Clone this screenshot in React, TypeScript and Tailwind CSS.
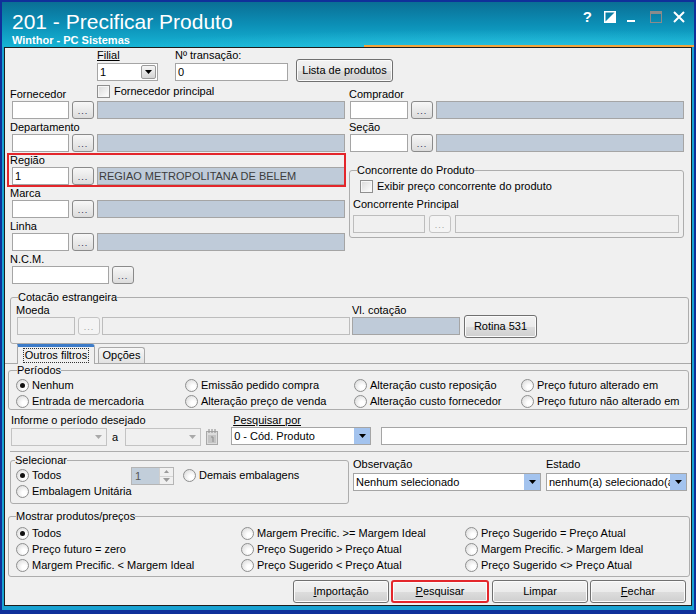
import React from 'react';

type Kids = { children?: React.ReactNode; className?: string };

const Arrow = ({ color = '#000' }: { color?: string }) => (
  <svg width="7" height="4" viewBox="0 0 7 4">
    <path d="M0 0h7L3.5 4z" fill={color} />
  </svg>
);

function Lbl({ children, className = '' }: Kids) {
  return <div className={`h-[13px] text-[11px] leading-[13px] text-black whitespace-nowrap ${className}`}>{children}</div>;
}

function Edit({ className = '', value = '', disabled = false }: { className?: string; value?: string; disabled?: boolean }) {
  return (
    <div
      className={`h-[18px] shrink-0 border px-[2px] text-[11px] leading-[16px] text-black whitespace-nowrap overflow-hidden ${
        disabled ? 'border-[#bdbdbd] bg-[#f0f0f0]' : 'border-[#a5a5a5] bg-white'
      } ${className}`}
    >
      {value}
    </div>
  );
}

function Info({ className = '', value = '' }: { className?: string; value?: string }) {
  return (
    <div className={`h-[18px] shrink-0 border border-[#a5a5a5] bg-[#bfcbd9] px-[1px] text-[11px] leading-[16px] text-[#3c3c3c] whitespace-nowrap overflow-hidden ${className}`}>
      {value}
    </div>
  );
}

function Dots({ className = '', disabled = false }: { className?: string; disabled?: boolean }) {
  return (
    <div
      className={`h-[18px] shrink-0 rounded-[3px] border flex items-end justify-center pb-[2px] text-[9px] leading-[9px] tracking-[1px] ${
        disabled
          ? 'border-[#c4c4c4] bg-[#f4f4f4] text-[#a0a0a0]'
          : 'border-[#8a8a8a] bg-[linear-gradient(#f7f7f7,#dcdcdc)] text-[#1c1c4c]'
      } ${className}`}
    >
      ...
    </div>
  );
}

function WinBtn({ children, className = '' }: Kids) {
  return (
    <div
      className={`h-[23px] shrink-0 rounded-[3px] border border-[#707070] bg-[linear-gradient(#f2f2f2_0%,#ebebeb_50%,#dddddd_51%,#cfcfcf_100%)] shadow-[inset_0_0_0_1px_#fbfbfb] flex items-center justify-center text-[11px] leading-[13px] text-black ${className}`}
    >
      {children}
    </div>
  );
}

function Radio({ label, checked = false }: { label: string; checked?: boolean }) {
  return (
    <div className="flex items-center h-[16px]">
      <span className="w-[13px] h-[13px] shrink-0 rounded-full border border-[#8e8f8f] bg-[radial-gradient(circle_at_65%_65%,#ffffff_20%,#d4d4d4_100%)] flex items-center justify-center">
        {checked && <span className="w-[5px] h-[5px] rounded-full bg-[#111]" />}
      </span>
      <span className="ml-[3px] text-[11px] leading-[13px] whitespace-nowrap">{label}</span>
    </div>
  );
}

function Check({ label, className = '' }: { label: string; className?: string }) {
  return (
    <div className={`flex items-center h-[14px] ${className}`}>
      <span className="w-[13px] h-[13px] shrink-0 border border-[#8f8f8f] bg-[linear-gradient(135deg,#d9d9d9,#ffffff)] shadow-[inset_0_0_0_1px_#f6f6f6]" />
      <span className="ml-[4px] text-[11px] leading-[13px] whitespace-nowrap">{label}</span>
    </div>
  );
}

function Combo({ className = '', value = '', kind }: { className?: string; value?: string; kind: 'gray' | 'blue' | 'flat' }) {
  return (
    <div
      className={`h-[18px] shrink-0 flex border ${
        kind === 'flat' ? 'border-[#c3c3c3] bg-[#f0f0f0]' : 'border-[#a5a5a5] bg-white'
      } ${className}`}
    >
      <div className="flex-1 min-w-0 px-[2px] text-[11px] leading-[16px] whitespace-nowrap overflow-hidden">{value}</div>
      {kind === 'gray' && (
        <div className="w-[15px] m-[1px] rounded-[2px] border border-[#9a9a9a] bg-[linear-gradient(#f6f6f6,#d4d4d4)] flex items-center justify-center">
          <Arrow />
        </div>
      )}
      {kind === 'blue' && (
        <div className="w-[16px] bg-[#a3c3ee] flex items-center justify-center">
          <Arrow />
        </div>
      )}
      {kind === 'flat' && (
        <div className="w-[16px] flex items-center justify-center">
          <Arrow color="#a9a9a9" />
        </div>
      )}
    </div>
  );
}

function Group({ title, children, className = '', legend = '' }: Kids & { title: string; legend?: string }) {
  return (
    <fieldset className={`border border-[#adadad] rounded-[3px] ${className}`}>
      <legend className={`text-[11px] leading-[13px] text-black ${legend}`}>{title}</legend>
      {children}
    </fieldset>
  );
}

// lookup row: code box, "..." button and description box
function Lookup({ label, code = '', desc = '', side, top = 'mt-[2px]' }: { label: string; code?: string; desc?: string; side: 'l' | 'r'; top?: string }) {
  return (
    <>
      <Lbl className={top}>{label}</Lbl>
      {side === 'l' ? (
        <div className="flex h-[18px]">
          <Edit className="ml-[2px] w-[57px]" value={code} />
          <Dots className="ml-[3px] w-[22px]" />
          <Info className="ml-[3px] w-[248px]" value={desc} />
        </div>
      ) : (
        <div className="flex h-[18px]">
          <Edit className="ml-[1px] w-[58px]" value={code} />
          <Dots className="ml-[3px] w-[22px]" />
          <Info className="ml-[3px] w-[248px]" value={desc} />
        </div>
      )}
    </>
  );
}

function TitleIcons() {
  return (
    <div className="ml-auto mr-[9px] mt-[8px] flex items-center h-[14px] text-white">
      <span className="text-[15px] leading-[14px] font-bold">?</span>
      <svg className="ml-[12px]" width="12" height="12" viewBox="0 0 12 12">
        <rect x="0.75" y="0.75" width="10.5" height="10.5" fill="none" stroke="#fff" strokeWidth="1.5" />
        <path d="M11 1v10H1z" fill="#fff" />
      </svg>
      <svg className="ml-[11px]" width="8" height="12" viewBox="0 0 8 12">
        <rect x="0" y="9" width="8" height="2" fill="#fff" />
      </svg>
      <svg className="ml-[15px]" width="12" height="12" viewBox="0 0 12 12">
        <rect x="0.5" y="0.5" width="11" height="11" fill="none" stroke="#8b8b8b" />
        <rect x="0" y="0" width="12" height="3" fill="#8b8b8b" />
      </svg>
      <svg className="ml-[11px]" width="12" height="12" viewBox="0 0 12 12">
        <path d="M1 1l10 10M11 1L1 11" stroke="#fff" strokeWidth="2" />
      </svg>
    </div>
  );
}

function Calendar() {
  return (
    <svg width="14" height="18" viewBox="0 0 14 18">
      <rect x="1.5" y="3.5" width="11" height="13" fill="#dcdcdc" stroke="#a8a8a8" />
      <rect x="3" y="7" width="8" height="8" fill="#c4c4c4" />
      <path d="M4 1v4M7 1v4M10 1v4" stroke="#9a9a9a" strokeWidth="1.2" />
      <path d="M6 9h2v5" stroke="#8c8c8c" fill="none" />
    </svg>
  );
}

export default function App() {
  return (
    <div className="w-[696px] h-[614px] bg-[#10309a] pt-[2px] px-[2px] pb-[4px] font-['Liberation_Sans',Arial,sans-serif] text-black select-none">
      <div className="w-full h-full flex flex-col bg-[#19a2d2]">
        {/* caption */}
        <div className="h-[45px] shrink-0 flex flex-col bg-[radial-gradient(ellipse_90%_70%_at_75%_110%,rgba(60,210,235,0.55),transparent_70%),linear-gradient(180deg,#0a6f95_0%,#0c8fb6_50%,#16b4d5_100%)]">
          <div className="h-[43px] flex">
            <div className="pl-[10px] pt-[8px] text-white">
              <div className="text-[21px] leading-[24px]">201 - Precificar Produto</div>
              <div className="text-[11px] leading-[13px] font-bold">Winthor - PC Sistemas</div>
            </div>
            <TitleIcons />
          </div>
          <div className="h-[2px] ml-[362px] bg-[#f2a33a]" />
        </div>

        <div className="flex-1 min-h-0 mx-[2px] mb-[4px] border border-[#1d1d1d] bg-[#f0f0f0] relative flex flex-col">
          {/* filial / transação */}
          <div className="flex h-[36px] shrink-0">
            <div className="ml-[92px] w-[61px]">
              <Lbl className="mt-[1px] underline">Filial</Lbl>
              <Combo className="mt-[1px] w-[61px]" value="1" kind="gray" />
            </div>
            <div className="ml-[17px]">
              <Lbl className="mt-[1px]">Nº transação:</Lbl>
              <Edit className="mt-[1px] w-[113px]" value="0" />
            </div>
            <WinBtn className="ml-[8px] mt-[11px] w-[97px]">Lista de produtos</WinBtn>
          </div>

          {/* lookups */}
          <div className="flex items-start shrink-0">
            <div className="ml-[5px] w-[336px]">
              <div className="flex h-[17px]">
                <Lbl className="mt-[4px] w-[87px]">Fornecedor</Lbl>
                <Check className="mt-[0px]" label="Fornecedor principal" />
              </div>
              <div className="flex h-[18px]">
                <Edit className="ml-[2px] w-[57px]" />
                <Dots className="ml-[3px] w-[22px]" />
                <Info className="ml-[3px] w-[248px]" />
              </div>
              <Lookup side="l" label="Departamento" />
              <Lookup side="l" label="Região" code="1" desc="REGIAO METROPOLITANA DE BELEM" />
              <Lookup side="l" label="Marca" />
              <Lookup side="l" label="Linha" />
              <Lbl className="mt-[2px]">N.C.M.</Lbl>
              <div className="flex h-[18px]">
                <Edit className="ml-[2px] w-[97px]" />
                <Dots className="ml-[3px] w-[22px]" />
              </div>
            </div>

            <div className="ml-[3px] w-[335px]">
              <Lookup side="r" label="Comprador" top="mt-[4px]" />
              <Lookup side="r" label="Seção" />
              <Group title="Concorrente do Produto" className="mt-[12px] w-[335px] px-[3px] pb-[4px]" legend="ml-[4px]">
                <Check className="mt-[2px] ml-[7px]" label="Exibir preço concorrente do produto" />
                <Lbl className="mt-[5px]">Concorrente Principal</Lbl>
                <div className="flex mt-[4px]">
                  <Edit className="w-[72px]" disabled />
                  <Dots className="ml-[4px] w-[22px]" disabled />
                  <Edit className="ml-[4px] w-[224px]" disabled />
                </div>
              </Group>
            </div>
          </div>

          {/* cotação estrangeira */}
          <Group title="Cotacão estrangeira" className="mt-[7px] ml-[5px] w-[679px] pl-[6px] pb-[5px] shrink-0" legend="ml-[1px]">
            <div className="flex items-start">
              <div>
                <Lbl className="-ml-[1px]">Moeda</Lbl>
                <div className="flex">
                  <Edit className="w-[58px]" disabled />
                  <Dots className="ml-[3px] w-[22px]" disabled />
                  <Edit className="ml-[2px] w-[248px]" disabled />
                </div>
              </div>
              <div className="ml-[2px]">
                <Lbl>Vl. cotação</Lbl>
                <Info className="w-[108px]" />
              </div>
              <WinBtn className="ml-[4px] mt-[11px] w-[73px]">Rotina 531</WinBtn>
            </div>
          </Group>

          {/* tabs */}
          <div className="flex items-end h-[20px] shrink-0 border-b border-[#a9a9a9] pl-[12px]">
            <div className="relative -mb-px h-[20px] w-[78px] bg-[#f0f0f0] border-l border-r border-[#a9a9a9] border-t-[3px] border-t-[#3d7cc9] rounded-tr-[3px] flex items-center justify-center">
              <span className="px-[1px] outline-1 outline-dotted outline-[#333] text-[11px] leading-[13px]">Outros filtros</span>
            </div>
            <div className="h-[16px] w-[47px] ml-[3px] border border-b-0 border-[#a9a9a9] rounded-t-[3px] bg-[linear-gradient(#f7f7f7,#e2e2e2)] flex items-center justify-center text-[11px] leading-[13px]">
              Opções
            </div>
          </div>

          <Group title="Períodos" className="ml-[3px] w-[681px] pl-[7px] shrink-0" legend="ml-[1px]">
            <div className="grid grid-cols-[169px_169px_167px_1fr]">
              <Radio label="Nenhum" checked />
              <Radio label="Emissão pedido compra" />
              <Radio label="Alteração custo reposição" />
              <Radio label="Preço futuro alterado em" />
              <Radio label="Entrada de mercadoria" />
              <Radio label="Alteração preço de venda" />
              <Radio label="Alteração custo fornecedor" />
              <Radio label="Preço futuro não alterado em" />
            </div>
          </Group>

          {/* período / pesquisa */}
          <div className="flex items-start mt-[4px] shrink-0">
            <div className="ml-[6px]">
              <Lbl>Informe o período desejado</Lbl>
              <div className="flex items-center mt-[1px]">
                <Combo className="w-[96px]" kind="flat" />
                <span className="ml-[5px] text-[11px] leading-[13px]">a</span>
                <Combo className="ml-[7px] w-[76px]" kind="flat" />
                <span className="ml-[4px]">
                  <Calendar />
                </span>
              </div>
            </div>
            <div className="ml-[12px]">
              <Lbl className="ml-[2px] underline">Pesquisar por</Lbl>
              <Combo className="w-[140px]" value="0 - Cód. Produto" kind="blue" />
            </div>
            <Edit className="ml-[10px] mt-[13px] w-[306px]" />
          </div>

          <div className="mt-[5px] ml-[5px] w-[679px] h-0 border-t border-[#adadad] shrink-0" />

          {/* selecionar / observação / estado */}
          <div className="flex items-start mt-[2px] shrink-0">
            <Group title="Selecionar" className="ml-[5px] w-[339px] pl-[5px] pb-[4px]" legend="-ml-[1px]">
              <div className="flex h-[16px] items-center">
                <div className="w-[115px]">
                  <Radio label="Todos" checked />
                </div>
                <div className="self-start h-[18px] w-[43px] border border-[#b5b5b5] bg-[#c2ceda] flex">
                  <div className="flex-1 pl-[3px] text-[11px] leading-[16px] text-[#555]">1</div>
                  <div className="w-[14px] flex flex-col border-l border-[#cfcfcf] bg-[#f0f0f0]">
                    <div className="flex-1 flex items-center justify-center border-b border-[#d4d4d4]">
                      <svg width="5" height="3" viewBox="0 0 5 3"><path d="M0 3h5L2.5 0z" fill="#9a9a9a" /></svg>
                    </div>
                    <div className="flex-1 flex items-center justify-center">
                      <Arrow color="#9a9a9a" />
                    </div>
                  </div>
                </div>
                <div className="ml-[9px]">
                  <Radio label="Demais embalagens" />
                </div>
              </div>
              <Radio label="Embalagem Unitária" />
            </Group>
            <div className="ml-[4px] mt-[4px]">
              <Lbl>Observação</Lbl>
              <Combo className="mt-[2px] w-[188px]" value="Nenhum selecionado" kind="blue" />
            </div>
            <div className="ml-[5px] mt-[4px]">
              <Lbl>Estado</Lbl>
              <Combo className="mt-[2px] w-[141px]" value="nenhum(a) selecionado(a)" kind="blue" />
            </div>
          </div>

          <Group title="Mostrar produtos/preços" className="mt-[6px] ml-[3px] w-[682px] pl-[7px] pb-[3px] shrink-0">
            <div className="grid grid-cols-[225px_224px_1fr] mt-[2px]">
              <Radio label="Todos" checked />
              <Radio label="Margem Precific. >= Margem Ideal" />
              <Radio label="Preço Sugerido = Preço Atual" />
              <Radio label="Preço futuro = zero" />
              <Radio label="Preço Sugerido > Preço Atual" />
              <Radio label="Margem Precific. > Margem Ideal" />
              <Radio label="Margem Precific. < Margem Ideal" />
              <Radio label="Preço Sugerido < Preço Atual" />
              <Radio label="Preço Sugerido <> Preço Atual" />
            </div>
          </Group>

          {/* action buttons */}
          <div className="flex justify-end gap-[2px] pr-[5px] mt-[3px] shrink-0">
            <WinBtn className="w-[96px]">
              <span className="underline">I</span>mportação
            </WinBtn>
            <WinBtn className="w-[98px] border-2 border-[#e3262b]">
              <span className="underline">P</span>esquisar
            </WinBtn>
            <WinBtn className="w-[96px] ml-[1px]">Limpar</WinBtn>
            <WinBtn className="w-[96px]">
              <span className="underline">F</span>echar
            </WinBtn>
          </div>

          {/* highlight around the Região lookup */}
          <div className="absolute left-[2px] top-[105px] w-[339px] h-[34px] border-2 border-[#e3262b] pointer-events-none" />
        </div>
      </div>
    </div>
  );
}
